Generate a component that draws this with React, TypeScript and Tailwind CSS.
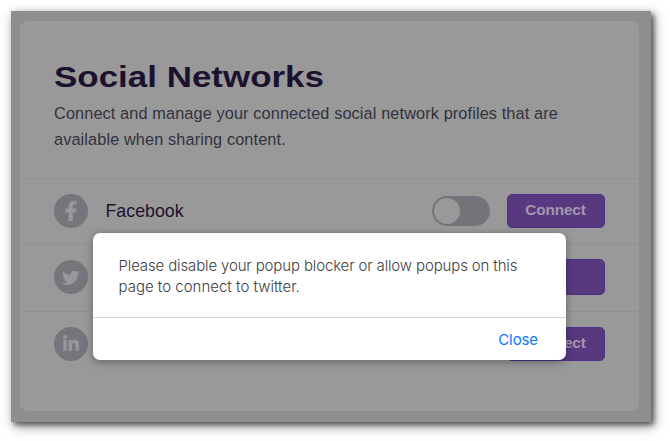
import { FaFacebookF, FaTwitter, FaLinkedinIn } from "react-icons/fa";
import type { ReactNode } from "react";

function NetworkRow({ icon, name, busy = false }: { icon: ReactNode; name?: string; busy?: boolean }) {
  return (
    <div className="flex h-[66.5px] items-center border-t border-[#929294] pr-[34.5px] pb-[1.5px] pl-[34px]">
      <span className="flex size-[34px] items-center justify-center rounded-full bg-[#74767b] text-[#97989a]">
        {icon}
      </span>
      <span className="ml-[17.5px] flex-1 text-[17.8px] leading-6 text-[#1c122d]">{name}</span>
      <span className="flex h-[30px] w-[58px] items-center rounded-full bg-[#727479] p-[2px]">
        <span className="size-[26px] rounded-full bg-[#999999]" />
      </span>
      {busy ? (
        <button className="ml-[17px] h-[36px] w-[98px] rounded-[5px] border border-[#50308a] bg-[#58397f]" />
      ) : (
        <button className="ml-[17px] h-[34px] w-[98px] rounded-[5px] border border-[#50308a] bg-[#58397f] pb-px text-[15.3px] font-bold tracking-[-0.1px] text-[#a197ae]">
          Connect
        </button>
      )}
    </div>
  );
}

export default function App() {
  return (
    <div className="h-[441px] w-[670px] overflow-hidden bg-white p-[11px] font-['Liberation_Sans',Arial,sans-serif]">
      <div className="relative h-[411px] w-[640px] bg-[#8d8e90] pt-[10px] pr-[12px] pl-[9px] shadow-[3px_3px_5px_rgba(0,0,0,0.5),3px_4px_12px_rgba(0,0,0,0.4)]">
        <div className="h-[390px] rounded-[8px] bg-[#999999]">
          <div className="h-[156.8px] pt-[36px] pl-[34px]">
            <h1 className="w-max origin-left scale-x-[1.165] text-[30px] leading-[40px] font-bold text-[#1c122d]">
              Social Networks
            </h1>
            <p className="w-[540px] pt-[4px] text-[16.3px] leading-[25.5px] tracking-[0.12px] text-[#33323f]">
              Connect and manage your connected social network profiles that are
              <br />
              available when sharing content.
            </p>
          </div>
          <NetworkRow
            icon={<FaFacebookF size={20} className="stroke-current" strokeWidth={12} />}
            name="Facebook"
          />
          <NetworkRow icon={<FaTwitter size={17.5} />} busy />
          <NetworkRow icon={<FaLinkedinIn size={18} className="stroke-current" strokeWidth={10} />} />
        </div>
        <div
          role="dialog"
          className="absolute top-[222px] left-[82px] flex h-[126.5px] w-[473px] flex-col rounded-[7px] bg-white font-['Inter',sans-serif] shadow-[0_2px_8px_rgba(0,0,0,0.35)]"
        >
          <div className="h-[85px] border-b border-[#d5d5d5] pt-[23px] pl-[25.5px] text-[15px] leading-[20.5px] font-light text-[#404040]">
            <span className="tracking-[-0.14px]">Please disable your popup blocker or allow popups on this</span>
            <br />
            page to connect to twitter.
          </div>
          <div className="flex flex-1 items-center justify-end pt-[2px] pr-[28px]">
            <button className="text-[15px] tracking-[-0.1px] text-[#087aff]">Close</button>
          </div>
        </div>
      </div>
    </div>
  );
}
